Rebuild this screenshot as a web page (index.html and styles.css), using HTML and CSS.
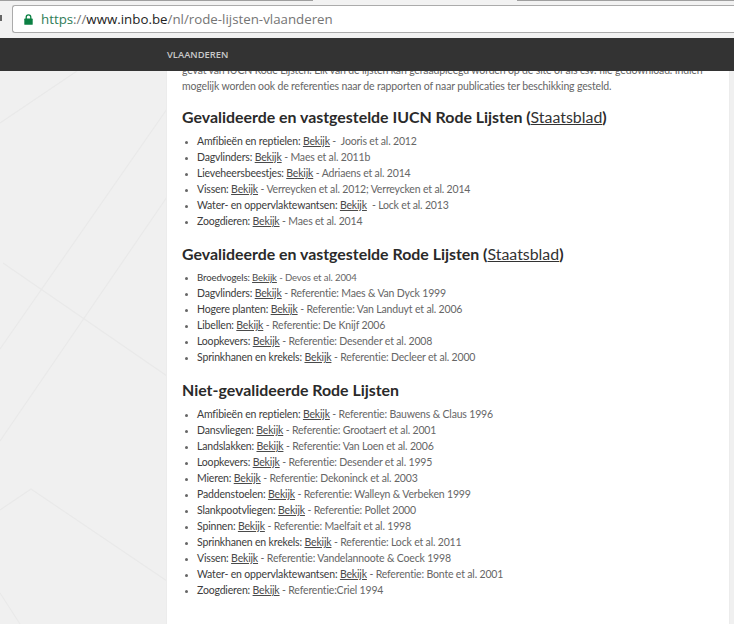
FILE: index.html
```html
<!DOCTYPE html>
<html lang="nl">
<head>
<meta charset="utf-8">
<title>Rode Lijsten Vlaanderen</title>
<link rel="stylesheet" href="styles.css">
</head>
<body>
<div class="chrome">
  <div class="tabline"><span class="tabseg tabseg-left"></span><span class="tabseg tabseg-right"></span></div>
  <div class="addr-row">
    <span class="reload"></span>
    <div class="addr">
      <svg class="lock" width="9" height="11" viewBox="0 0 9 11"><path d="M2.2 5V3.2a2.3 2.3 0 0 1 4.6 0V5" fill="none" stroke="#0b8043" stroke-width="1.3"/><rect x="0.3" y="4.6" width="8.4" height="6.2" rx="0.6" fill="#0b8043"/></svg>
      <span class="url"><span class="scheme">https</span>://<span class="host">www.inbo.be</span>/nl/rode-lijsten-vlaanderen</span>
    </div>
  </div>
</div>
<header class="topbar"><a class="nav-item">VLAANDEREN</a></header>
<main class="stage">
  <svg class="lines" width="167" height="553" viewBox="0 0 167 553"><g fill="none" stroke="#e9e9e9" stroke-width="1.2"><path d="M0 52 77 0"/><path d="M0 278 167 38"/><path d="M0 370 167 126"/><path d="M3 192 167 305"/><path d="M0 439 31 418 167 510"/><path d="M0 522 20 553"/></g></svg>
  <article class="page">
    <div class="content">
      <p class="intro">gevat van IUCN Rode Lijsten. Elk van de lijsten kan geraadpleegd worden op de site of als csv. file gedownload. Indien<br>mogelijk worden ook de referenties naar de rapporten of naar publicaties ter beschikking gesteld.</p>

      <h2>Gevalideerde en vastgestelde IUCN Rode Lijsten (<a href="#">Staatsblad</a>)</h2>
      <ul>
        <li><b>Amfibieën en reptielen:</b> <a href="#">Bekijk</a> -&nbsp; Jooris et al. 2012</li>
        <li><b>Dagvlinders:</b> <a href="#">Bekijk</a> - Maes et al. 2011b</li>
        <li><b>Lieveheersbeestjes:</b> <a href="#">Bekijk</a> - Adriaens et al. 2014</li>
        <li><b>Vissen:</b> <a href="#">Bekijk</a> - Verreycken et al. 2012; Verreycken et al. 2014</li>
        <li><b>Water- en oppervlaktewantsen:</b> <a href="#">Bekijk</a> &nbsp;- Lock et al. 2013</li>
        <li><b>Zoogdieren:</b> <a href="#">Bekijk</a> - Maes et al. 2014</li>
      </ul>

      <h2>Gevalideerde en vastgestelde Rode Lijsten (<a href="#">Staatsblad</a>)</h2>
      <ul>
        <li class="small"><b>Broedvogels:</b> <a href="#">Bekijk</a> - Devos et al. 2004</li>
        <li><b>Dagvlinders:</b> <a href="#">Bekijk</a> - Referentie: Maes &amp; Van Dyck 1999</li>
        <li><b>Hogere planten:</b> <a href="#">Bekijk</a> - Referentie: Van Landuyt et al. 2006</li>
        <li><b>Libellen:</b> <a href="#">Bekijk</a> - Referentie: De Knijf 2006</li>
        <li><b>Loopkevers:</b> <a href="#">Bekijk</a> - Referentie: Desender et al. 2008</li>
        <li><b>Sprinkhanen en krekels:</b> <a href="#">Bekijk</a> - Referentie: Decleer et al. 2000</li>
      </ul>

      <h2>Niet-gevalideerde Rode Lijsten</h2>
      <ul>
        <li><b>Amfibieën en reptielen:</b> <a href="#">Bekijk</a> - Referentie: Bauwens &amp; Claus 1996</li>
        <li><b>Dansvliegen:</b> <a href="#">Bekijk</a> - Referentie: Grootaert et al. 2001</li>
        <li><b>Landslakken:</b> <a href="#">Bekijk</a> - Referentie: Van Loen et al. 2006</li>
        <li><b>Loopkevers:</b> <a href="#">Bekijk</a> - Referentie: Desender et al. 1995</li>
        <li><b>Mieren:</b> <a href="#">Bekijk</a> - Referentie: Dekoninck et al. 2003</li>
        <li><b>Paddenstoelen:</b> <a href="#">Bekijk</a> - Referentie: Walleyn &amp; Verbeken 1999</li>
        <li><b>Slankpootvliegen:</b> <a href="#">Bekijk</a> - Referentie: Pollet 2000</li>
        <li><b>Spinnen:</b> <a href="#">Bekijk</a> - Referentie: Maelfait et al. 1998</li>
        <li><b>Sprinkhanen en krekels:</b> <a href="#">Bekijk</a> - Referentie: Lock et al. 2011</li>
        <li><b>Vissen:</b> <a href="#">Bekijk</a> - Referentie: Vandelannoote &amp; Coeck 1998</li>
        <li><b>Water- en oppervlaktewantsen:</b> <a href="#">Bekijk</a> - Referentie: Bonte et al. 2001</li>
        <li><b>Zoogdieren:</b> <a href="#">Bekijk</a> - Referentie:Criel 1994</li>
      </ul>
    </div>
  </article>
</main>
</body>
</html>
```
FILE: styles.css
```css
* { box-sizing: border-box; }
html, body { margin: 0; padding: 0; height: 100%; overflow: hidden; }
body {
  width: 734px;
  height: 624px;
  display: flex;
  flex-direction: column;
  background: #f0f0f0;
  font-family: Lato, "Open Sans", sans-serif;
  color: #555;
}
.chrome {
  height: 38px;
  flex: none;
  background: #f2f2f2;
  display: flex;
  flex-direction: column;
}
.tabline { height: 1px; display: flex; justify-content: space-between; }
.tabseg { height: 1px; background: #9f9f9f; }
.tabseg-left { width: 313px; }
.tabseg-right { width: 217px; }
.addr-row { flex: 1; display: flex; align-items: flex-start; padding-top: 4px; }
.reload { width: 2px; height: 6px; margin: 10px 10px 0 0; background: #666; flex: none; }
.addr {
  flex: 1;
  height: 28px;
  background: #fff;
  border: 1px solid #ababab;
  border-right: 0;
  border-radius: 3px 0 0 3px;
  display: flex;
  align-items: center;
  padding-left: 11px;
  gap: 8px;
}
.lock { flex: none; }
.url { font: 13.3px/18px "Open Sans", sans-serif; color: #757575; white-space: nowrap; }
.scheme { color: #2f7d57; }
.host { color: #222; }
.topbar {
  height: 33px;
  flex: none;
  background: #333;
  display: flex;
  align-items: center;
  padding-left: 167px;
  position: relative;
  z-index: 2;
}
.nav-item { color: #c9c9c9; font: 600 9.4px/33px "Open Sans", sans-serif; }
.stage {
  flex: 1;
  min-height: 0;
  position: relative;
  overflow: hidden;
  display: flex;
  padding: 0 5px 0 167px;
}
.lines { position: absolute; left: 0; top: 0; }
.page {
  position: relative;
  width: 562px;
  background: #fff;
  box-shadow: 0 0 0 1px #ececec;
}
.content { padding: 0 15px; margin-top: -9px; }
.intro { margin: 0 0 13px; font-size: 10.5px; letter-spacing: -0.15px; line-height: 16px; color: #666; white-space: nowrap; }
h2 {
  margin: 0 0 6px;
  font-size: 15.9px;
  line-height: 20px;
  font-weight: 700;
  color: #2a2a2a;
}
h2 a { color: #333; font-weight: 400; text-decoration: underline; }
ul { margin: 0 0 15px; padding: 0 0 0 15px; list-style: disc; }
li { font-size: 10.5px; letter-spacing: -0.17px; line-height: 16px; color: #666; }
li::marker { color: #666; font-size: 8px; }
li b { font-weight: 400; color: #3c3c3c; }
li a { color: #4a4a4a; text-decoration: underline; }
li.small { font-size: 9.6px; letter-spacing: -0.13px; line-height: 15px; }
```
